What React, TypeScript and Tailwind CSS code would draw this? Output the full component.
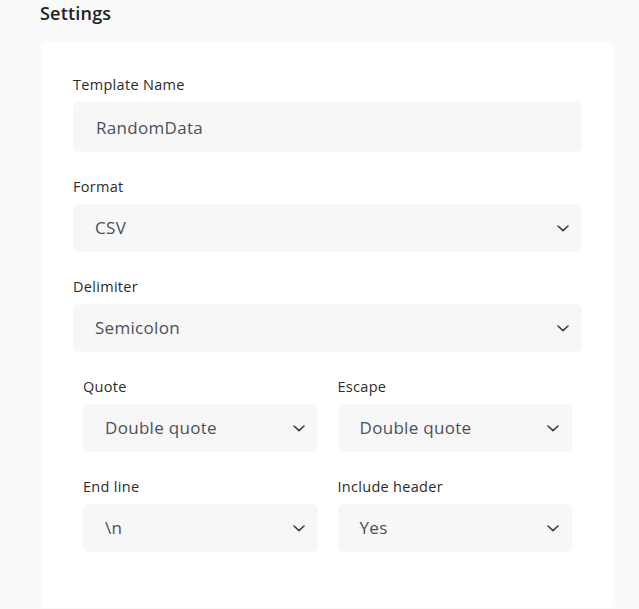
import type { ReactNode } from "react";

const FONT = "font-['Open_Sans','Noto_Sans',sans-serif]";

function Chevron() {
  return (
    <svg width="12" height="7" viewBox="0 0 12 7" fill="none" aria-hidden="true">
      <polyline
        points="1,1 6,5.6 11,1"
        stroke="#3a3d44"
        strokeWidth="1.6"
        strokeLinecap="round"
        strokeLinejoin="round"
      />
    </svg>
  );
}

function Field({ label, children }: { label: string; children: ReactNode }) {
  return (
    <div className="mb-6 flex flex-col">
      <label className="mb-1.5 text-[14.5px] leading-[22px] tracking-[0.3px] text-[#2b2b2b]">{label}</label>
      {children}
    </div>
  );
}

function Select({ value }: { value: string }) {
  return (
    <div className="flex h-12 items-center justify-between rounded-md bg-[#f7f7f7] pl-[22px] pr-[13px]">
      <span className="text-[17px] tracking-[0.3px] text-[#4c505c]">{value}</span>
      <Chevron />
    </div>
  );
}

export default function App() {
  return (
    <div className={`min-h-[609px] bg-[#fafafa] pl-[41px] pr-[25px] ${FONT}`}>
      <h1 className="-ml-px mb-4 text-[18px] font-semibold leading-[26px] tracking-[0.2px] text-[#222]">Settings</h1>

      <section className="rounded-md bg-white px-8 pt-8 pb-8">
        <Field label="Template Name">
          <input
            readOnly
            value="RandomData"
            className="h-[50px] rounded-md bg-[#f7f7f7] px-[23px] text-[17px] tracking-[0.3px] text-[#4c505c] outline-none"
          />
        </Field>

        <Field label="Format">
          <Select value="CSV" />
        </Field>

        <Field label="Delimiter">
          <Select value="Semicolon" />
        </Field>

        <div className="grid grid-cols-2 gap-x-5 px-2.5">
          <Field label="Quote">
            <Select value="Double quote" />
          </Field>
          <Field label="Escape">
            <Select value="Double quote" />
          </Field>
          <Field label="End line">
            <Select value="\n" />
          </Field>
          <Field label="Include header">
            <Select value="Yes" />
          </Field>
        </div>
      </section>
    </div>
  );
}
